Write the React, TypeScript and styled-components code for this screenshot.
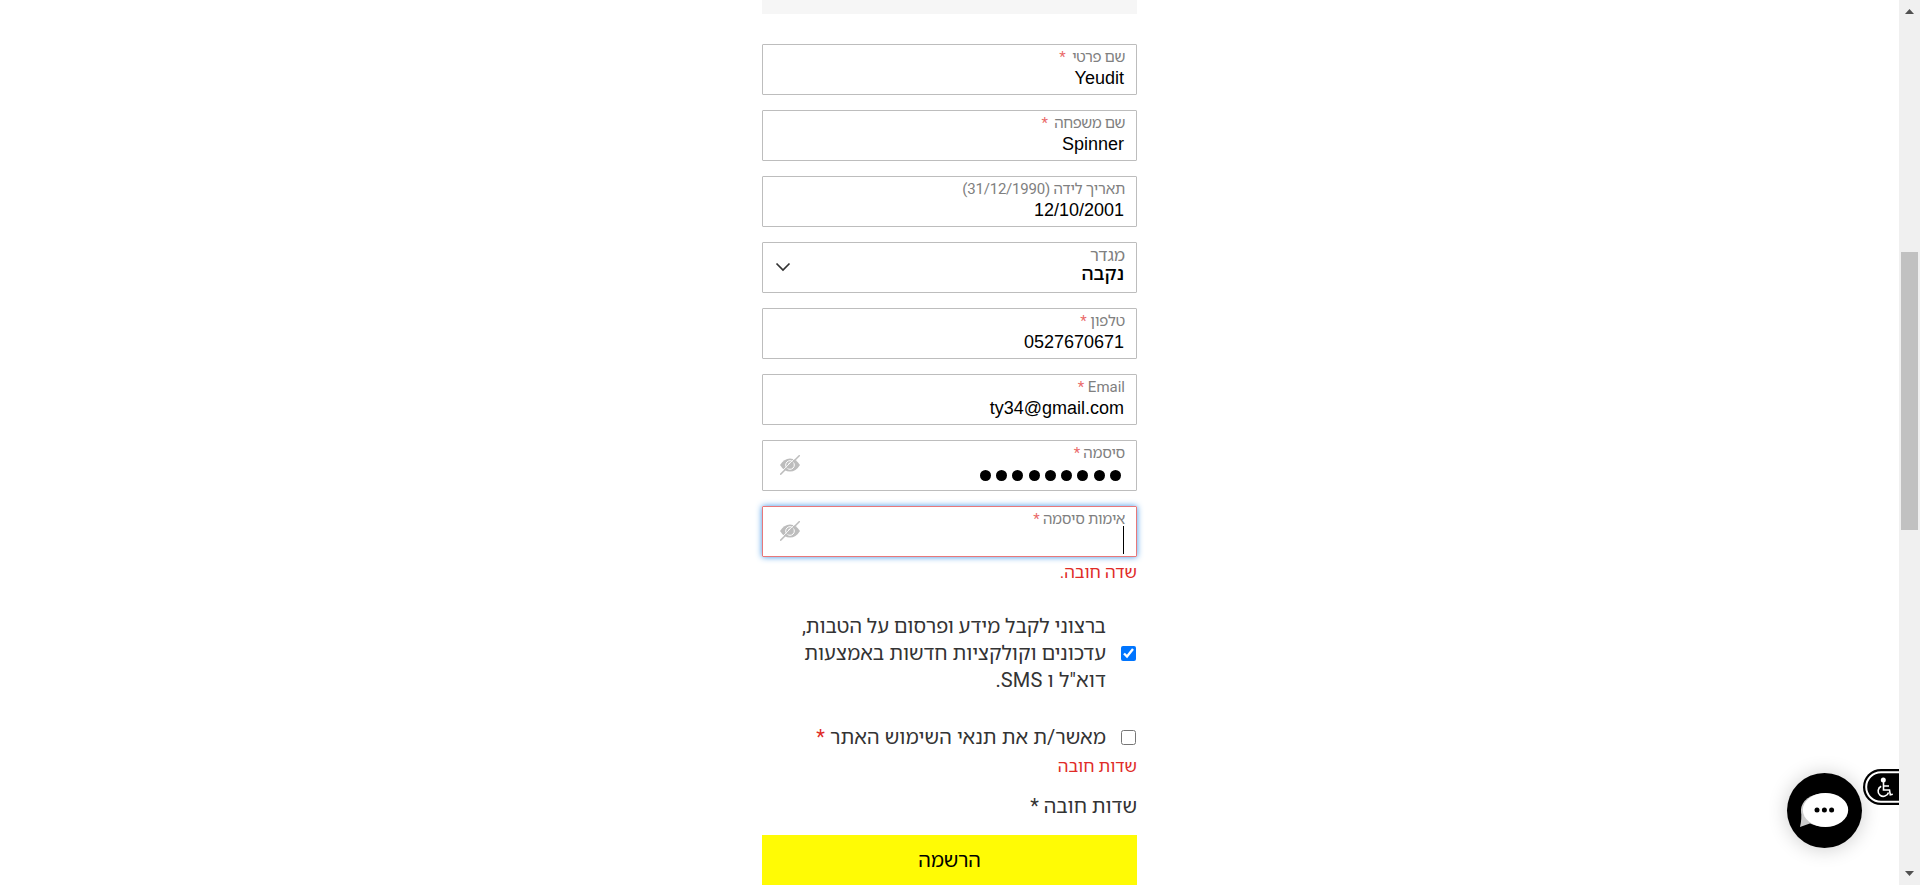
import React from "react";
import styled, { createGlobalStyle } from "styled-components";

const Global = createGlobalStyle`
  * { box-sizing: border-box; }
  body { margin: 0; background: #fff; overflow: hidden; }
`;

const family = `Roboto, "Noto Sans Hebrew", "Liberation Sans", sans-serif`;

const Page = styled.div`
  direction: ltr;
  display: flex;
  height: 885px;
  width: 1920px;
  overflow: hidden;
  font-family: ${family};
  color: #333;
`;

const Main = styled.main`
  flex: 1;
  display: flex;
  justify-content: center;
`;

const Form = styled.form`
  direction: rtl;
  width: 375px;
  display: flex;
  flex-direction: column;
`;

const TopPanel = styled.div`
  height: 14px;
  margin-bottom: 30px;
  background: #f6f6f6;
`;

const Fields = styled.div`
  display: flex;
  flex-direction: column;
  gap: 15px;
`;

const FieldBox = styled.div<{ $invalid?: boolean }>`
  height: 51px;
  display: flex;
  align-items: center;
  justify-content: space-between;
  padding: 0 11px 0 17px;
  border: 1px solid ${(p) => (p.$invalid ? "#e8787a" : "#bdbdbd")};
  border-radius: 1px;
  box-shadow: ${(p) => (p.$invalid ? "0 0 6px #3f95e6" : "none")};
`;

const FieldText = styled.div`
  height: 49px;
  display: flex;
  flex-direction: column;
  align-items: flex-start;
`;

const Label = styled.label<{ $spacing: number; $size: number }>`
  height: 22px;
  line-height: 24px;
  font-size: ${(p) => p.$size}px;
  letter-spacing: ${(p) => p.$spacing}px;
  color: #808080;
  white-space: pre;
`;

const Star = styled.span`
  color: #ea6a6a;
`;

const Value = styled.span<{ $hebrew?: boolean }>`
  height: 24px;
  line-height: 22px;
  margin-right: 1px;
  font-family: "Liberation Sans", Arial, sans-serif;
  font-size: 18px;
  color: #000;
  direction: ltr;
  ${(p) => p.$hebrew && `font-family: ${family}; font-weight: 500; font-size: 19px; margin-top: -2px;`}
`;

const Dots = styled.span`
  display: flex;
  gap: 5.3px;
  margin: 7px 4px 0 0;
`;

const Dot = styled.i`
  width: 11px;
  height: 11px;
  border-radius: 50%;
  background: #000;
`;

const Caret = styled.i`
  width: 1px;
  height: 28px;
  margin: -3px 1px 0 0;
  background: #000;
`;

const FieldError = styled.p`
  margin: 5px 0 0;
  height: 20px;
  line-height: 20px;
  font-size: 17px;
  color: #e02b27;
`;

const CheckRow = styled.div<{ $top: number }>`
  margin-top: ${(p) => p.$top}px;
  display: flex;
  align-items: center;
  gap: 15px;
`;

const CheckBox = styled.input`
  width: 15px;
  height: 15px;
  margin: 0 1px 1px 0;
  flex: none;
`;

const CheckText = styled.span`
  display: flex;
  flex-direction: column;
  font-size: 20px;
  line-height: 27px;
  white-space: pre;
`;

const Line = styled.span<{ $spacing?: number }>`
  letter-spacing: ${(p) => p.$spacing ?? 0}px;
`;

const Required = styled.span`
  color: #e02b27;
`;

const Note = styled.p`
  margin: 16px 0 0;
  height: 28px;
  line-height: 28px;
  font-size: 20px;
`;

const Submit = styled.button`
  margin-top: 15px;
  height: 50px;
  flex: none;
  border: 0;
  padding: 0 0 2px;
  background: #fffb05;
  font: 400 20px ${family};
  letter-spacing: -0.2px;
  color: #000;
`;

const Scrollbar = styled.aside`
  width: 21px;
  height: 885px;
  background: #f0f0f0;
  display: flex;
  flex-direction: column;
  align-items: center;
  justify-content: space-between;
  padding: 9px 0 9px;
`;

const Thumb = styled.div`
  width: 17px;
  height: 278px;
  margin: 238px 1px auto 0;
  background: #c1c1c1;
`;

const Chat = styled.div`
  position: absolute;
  left: 1787px;
  top: 773px;
  width: 75px;
  height: 75px;
  border-radius: 50%;
  background: #000;
  box-shadow: 0 1px 20px rgba(0, 0, 0, 0.2);
`;

const Access = styled.div`
  position: absolute;
  left: 1863px;
  top: 769px;
  width: 36px;
  height: 36px;
`;

const EyeSvg = styled.svg`
  display: block;
  margin-top: -2px;
`;

const ChevronSvg = styled.svg`
  margin: -1px 0 0 -7px;
`;

const EyeIcon = () => (
  <EyeSvg width="20" height="20" viewBox="0 0 20 20">
    <path d="M0 10Q4 3.4 10 3.4T20 10Q16 16.6 10 16.6T0 10Z" fill="#bdbdbd" />
    <circle cx="10" cy="10" r="4.3" fill="none" stroke="#fff" strokeWidth="1" />
    <path d="M8.4 9.8a1.8 1.8 0 0 1 1.8-1.8" stroke="#fff" strokeWidth="1" fill="none" />
    <path d="M-.7 18.8L18.8-.7" stroke="#fff" strokeWidth="0.9" />
    <path d="M.2 19.7L19.8.2" stroke="#bdbdbd" strokeWidth="1.5" />
  </EyeSvg>
);

const Chevron = () => (
  <ChevronSvg width="20" height="12" viewBox="0 0 20 12">
    <path d="M3.5 2.5L10 9L16.5 2.5" fill="none" stroke="#333" strokeWidth="1.7" />
  </ChevronSvg>
);

type FieldProps = {
  label: string;
  star?: string;
  spacing?: number;
  size?: number;
  invalid?: boolean;
  icon?: React.ReactNode;
  children: React.ReactNode;
};

const Field = ({ label, star, spacing = 0, size = 15, invalid, icon, children }: FieldProps) => (
  <FieldBox $invalid={invalid}>
    <FieldText>
      <Label $spacing={spacing} $size={size}>
        {label}
        {star && <Star>{star}</Star>}
      </Label>
      {children}
    </FieldText>
    {icon}
  </FieldBox>
);

export default function App() {
  return (
    <Page>
      <Global />
      <Main>
        <Form>
          <TopPanel />
          <Fields>
            <Field label="שם פרטי" star="  *" spacing={-0.35}><Value>Yeudit</Value></Field>
            <Field label="שם משפחה" star="  *" spacing={-0.4}><Value>Spinner</Value></Field>
            <Field label="תאריך לידה (31/12/1990)" spacing={-0.2}><Value>12/10/2001</Value></Field>
            <Field label="מגדר" size={17} icon={<Chevron />}><Value $hebrew>נקבה</Value></Field>
            <Field label="טלפון" star=" *" spacing={-0.15}><Value>0527670671</Value></Field>
            <Field label="Email" star=" *"><Value>ty34@gmail.com</Value></Field>
            <Field label="סיסמה" star=" *" spacing={-0.25} icon={<EyeIcon />}>
              <Dots>{Array.from({ length: 9 }, (_, i) => <Dot key={i} />)}</Dots>
            </Field>
            <Field label="אימות סיסמה" star=" *" spacing={-0.25} invalid icon={<EyeIcon />}>
              <Caret />
            </Field>
          </Fields>
          <FieldError>שדה חובה.</FieldError>
          <CheckRow $top={31}>
            <CheckBox type="checkbox" defaultChecked />
            <CheckText>
              <Line $spacing={-0.06}>ברצוני לקבל מידע ופרסום על הטבות,</Line>
              <Line>עדכונים וקולקציות חדשות באמצעות</Line>
              <Line $spacing={0.15}>דוא"ל ו SMS.</Line>
            </CheckText>
          </CheckRow>
          <CheckRow $top={30}>
            <CheckBox type="checkbox" />
            <CheckText>
              <Line $spacing={0.08}>מאשר/ת את תנאי השימוש האתר <Required>*</Required></Line>
            </CheckText>
          </CheckRow>
          <FieldError>שדות חובה</FieldError>
          <Note>שדות חובה *</Note>
          <Submit type="button">הרשמה</Submit>
        </Form>
      </Main>
      <Scrollbar>
        <svg width="9" height="5" viewBox="0 0 9 5"><path d="M0 5L4.5 0L9 5Z" fill="#505050" /></svg>
        <Thumb />
        <svg width="9" height="5" viewBox="0 0 9 5"><path d="M0 0L4.5 5L9 0Z" fill="#505050" /></svg>
      </Scrollbar>
      <Chat>
        <svg width="75" height="75" viewBox="0 0 75 75">
          <path d="M14 36Q15 46 13 54L27 49L30 28Z" fill="#ccc" />
          <ellipse cx="36.5" cy="37" rx="22.5" ry="16.6" fill="#ccc" />
          <ellipse cx="38.5" cy="37" rx="22.7" ry="17" fill="#fff" />
          <circle cx="30" cy="37" r="2.5" />
          <circle cx="37.4" cy="37" r="2.5" />
          <circle cx="44.6" cy="37" r="2.5" />
        </svg>
      </Chat>
      <Access>
        <svg width="36" height="36" viewBox="0 0 36 36">
          <path d="M36 0H18a18 18 0 0 0 0 36H36Z" fill="#000" />
          <path d="M36 3.2H18a14.8 14.8 0 0 0 0 29.6H36" fill="none" stroke="#fff" strokeWidth="2" />
          <circle cx="20.3" cy="11" r="2.5" fill="#fff" />
          <path d="M20.5 13V21H26.5L27.3 25.8L29.8 25.3M20.7 17H26M18.2 17.2A5.3 5.3 0 1 0 25.5 23.5" fill="none" stroke="#fff" strokeWidth="1.6" />
        </svg>
      </Access>
    </Page>
  );
}
